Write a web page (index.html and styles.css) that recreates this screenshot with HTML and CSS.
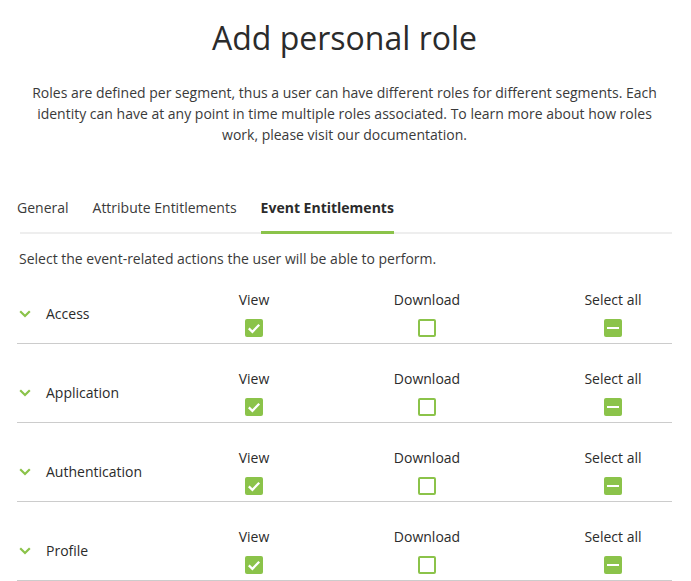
FILE: index.html
```html
<!DOCTYPE html>
<html lang="en">
<head>
<meta charset="utf-8">
<title>Add personal role</title>
<link rel="stylesheet" href="styles.css">
</head>
<body>
<main class="page">
  <h1 class="title">Add personal role</h1>
  <p class="desc">Roles are defined per segment, thus a user can have different roles for different segments. Each identity can have at any point in time multiple roles associated. To learn more about how roles work, please visit our documentation.</p>

  <nav class="tabs">
    <span class="tab">General</span>
    <span class="tab">Attribute Entitlements</span>
    <span class="tab active">Event Entitlements</span>
  </nav>

  <p class="intro">Select the event-related actions the user will be able to perform.</p>

  <section class="rows">
    <div class="row">
      <div class="name"><svg class="chev" viewBox="0 0 12 8" width="12" height="8"><path d="M1.2 1.2 L6 6 L10.8 1.2" fill="none" stroke="#8bc34a" stroke-width="2.2"/></svg>Access</div>
      <div class="cell"><span class="label">View</span><span class="box checked"><svg viewBox="0 0 18 18" width="18" height="18"><path d="M3.8 9.4 L7.4 12.8 L14.2 5.8" fill="none" stroke="#fff" stroke-width="2.3"/></svg></span></div>
      <div class="cell"><span class="label">Download</span><span class="box"></span></div>
      <div class="cell"><span class="label">Select all</span><span class="box partial"><i class="bar"></i></span></div>
    </div>
    <div class="row">
      <div class="name"><svg class="chev" viewBox="0 0 12 8" width="12" height="8"><path d="M1.2 1.2 L6 6 L10.8 1.2" fill="none" stroke="#8bc34a" stroke-width="2.2"/></svg>Application</div>
      <div class="cell"><span class="label">View</span><span class="box checked"><svg viewBox="0 0 18 18" width="18" height="18"><path d="M3.8 9.4 L7.4 12.8 L14.2 5.8" fill="none" stroke="#fff" stroke-width="2.3"/></svg></span></div>
      <div class="cell"><span class="label">Download</span><span class="box"></span></div>
      <div class="cell"><span class="label">Select all</span><span class="box partial"><i class="bar"></i></span></div>
    </div>
    <div class="row">
      <div class="name"><svg class="chev" viewBox="0 0 12 8" width="12" height="8"><path d="M1.2 1.2 L6 6 L10.8 1.2" fill="none" stroke="#8bc34a" stroke-width="2.2"/></svg>Authentication</div>
      <div class="cell"><span class="label">View</span><span class="box checked"><svg viewBox="0 0 18 18" width="18" height="18"><path d="M3.8 9.4 L7.4 12.8 L14.2 5.8" fill="none" stroke="#fff" stroke-width="2.3"/></svg></span></div>
      <div class="cell"><span class="label">Download</span><span class="box"></span></div>
      <div class="cell"><span class="label">Select all</span><span class="box partial"><i class="bar"></i></span></div>
    </div>
    <div class="row">
      <div class="name"><svg class="chev" viewBox="0 0 12 8" width="12" height="8"><path d="M1.2 1.2 L6 6 L10.8 1.2" fill="none" stroke="#8bc34a" stroke-width="2.2"/></svg>Profile</div>
      <div class="cell"><span class="label">View</span><span class="box checked"><svg viewBox="0 0 18 18" width="18" height="18"><path d="M3.8 9.4 L7.4 12.8 L14.2 5.8" fill="none" stroke="#fff" stroke-width="2.3"/></svg></span></div>
      <div class="cell"><span class="label">Download</span><span class="box"></span></div>
      <div class="cell"><span class="label">Select all</span><span class="box partial"><i class="bar"></i></span></div>
    </div>
  </section>
</main>
</body>
</html>
```

FILE: styles.css
```css
html, body {
  margin: 0;
  padding: 0;
  background: #ffffff;
}

body {
  font-family: "Open Sans", "Liberation Sans", sans-serif;
  color: #333333;
  font-size: 14px;
}

.page {
  padding: 16px 19px 0 17px;
}

.title {
  margin: 0;
  text-align: center;
  font-size: 32px;
  line-height: 44px;
  font-weight: 500;
  color: #2b2b2b;
}

.desc {
  margin: 22px 0 0;
  padding: 0 10px;
  text-align: center;
  font-size: 14px;
  line-height: 21px;
  color: #3a3a3a;
}

.tabs {
  display: flex;
  gap: 24px;
  margin: 53px 0 0 3px;
  border-bottom: 2px solid #eeeeee;
}

.tab {
  line-height: 20px;
  padding-bottom: 13px;
  margin-bottom: -2px;
  border-bottom: 3px solid transparent;
  color: #3a3a3a;
}

.tab:first-child {
  margin-left: -3px;
}

.tab.active {
  font-weight: 700;
  color: #2b2b2b;
  border-bottom-color: #8bc34a;
}

.intro {
  margin: 15px 0 0 2px;
  line-height: 20px;
  color: #3a3a3a;
}

.row {
  display: grid;
  grid-template-columns: 191px 92px 254px 118px;
  padding: 25px 0 6px;
  border-bottom: 1px solid #cccccc;
}

.row:first-child {
  padding-top: 21px;
}

.name {
  display: flex;
  align-items: center;
  align-self: center;
  gap: 15px;
  padding-left: 2px;
  line-height: 20px;
  font-weight: 500;
  color: #2b2b2b;
}

.chev {
  display: block;
  flex: none;
}

.cell {
  display: flex;
  flex-direction: column;
  align-items: center;
  gap: 9px;
}

.label {
  line-height: 20px;
  font-weight: 500;
  color: #2b2b2b;
}

.box {
  box-sizing: border-box;
  width: 18px;
  height: 18px;
  border: 2px solid #8bc34a;
  border-radius: 2px;
  display: flex;
  align-items: center;
  justify-content: center;
}

.box.checked,
.box.partial {
  background: #8bc34a;
  border: none;
}

.box svg {
  display: block;
}

.bar {
  display: block;
  width: 12px;
  height: 2.5px;
  background: #ffffff;
}
```
